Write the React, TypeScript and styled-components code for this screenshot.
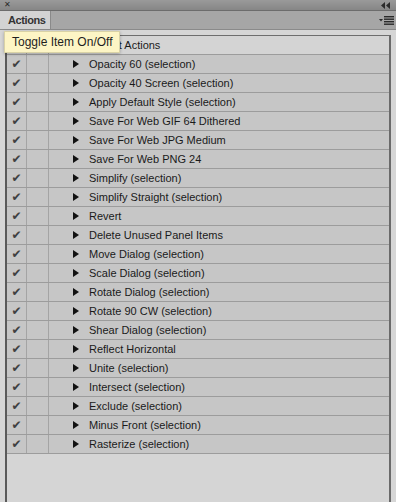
import styled, { createGlobalStyle } from 'styled-components';

const GlobalStyle = createGlobalStyle`
  html, body {
    margin: 0;
    padding: 0;
    background: #d6d6d6;
  }
  body {
    font-family: "Liberation Sans", Arial, sans-serif;
  }
`;

const actions = [
  'Opacity 60 (selection)',
  'Opacity 40 Screen (selection)',
  'Apply Default Style (selection)',
  'Save For Web GIF 64 Dithered',
  'Save For Web JPG Medium',
  'Save For Web PNG 24',
  'Simplify (selection)',
  'Simplify Straight (selection)',
  'Revert',
  'Delete Unused Panel Items',
  'Move Dialog (selection)',
  'Scale Dialog (selection)',
  'Rotate Dialog (selection)',
  'Rotate 90 CW (selection)',
  'Shear Dialog (selection)',
  'Reflect Horizontal',
  'Unite (selection)',
  'Intersect (selection)',
  'Exclude (selection)',
  'Minus Front (selection)',
  'Rasterize (selection)',
];

const Panel = styled.div`
  position: relative;
  width: 396px;
  height: 502px;
  display: flex;
  flex-direction: column;
  background: #d6d6d6;
  overflow: hidden;
`;

const TitleBar = styled.div`
  height: 10px;
  display: flex;
  align-items: center;
  justify-content: space-between;
  padding: 0 5px 0 4px;
  background: linear-gradient(#9a9a9a, #868686);
  border-bottom: 1px solid #6c6c6c;
  color: #2a2a2a;
  font-family: "DejaVu Sans", sans-serif;
  font-size: 8px;
  font-weight: bold;
  line-height: 10px;
`;

const TabBar = styled.div`
  height: 18px;
  display: flex;
  align-items: stretch;
  background: #a6a6a6;
  border-bottom: 1px solid #8a8a8a;
`;

const Tab = styled.div`
  width: 51px;
  display: flex;
  align-items: center;
  padding-left: 8px;
  box-sizing: border-box;
  background: #d3d3d3;
  border-right: 1px solid #8a8a8a;
  font-size: 11px;
  font-weight: bold;
  letter-spacing: -0.4px;
  color: #333;
`;

const MenuButton = styled.div`
  margin-left: auto;
  width: 20px;
  display: flex;
  align-items: center;
  justify-content: center;
`;

const Body = styled.div`
  flex: 1;
  display: flex;
  padding: 5px 5px 0 5px;
`;

const List = styled.div`
  flex: 1;
  display: flex;
  flex-direction: column;
  border-left: 2px solid #5a5a5a;
  border-right: 2px solid #6a6a6a;
  border-top: 1px solid #6e6e6e;
  background: #d5d5d5;
`;

const Row = styled.div<{ $folder?: boolean }>`
  height: 18px;
  display: flex;
  align-items: stretch;
  background: ${(p) => (p.$folder ? '#d4d4d4' : '#c6c6c6')};
  border-bottom: 1px solid #9c9c9c;
  font-size: 11px;
  color: #1a1a1a;
`;

const CheckCell = styled.div`
  width: 19px;
  display: flex;
  align-items: center;
  justify-content: center;
  border-right: 1px solid #a4a4a4;
  color: #404040;
  font-family: "DejaVu Sans", sans-serif;
  font-size: 12px;
`;

const DialogCell = styled.div`
  width: 21px;
  border-right: 1px solid #a4a4a4;
`;

const NameCell = styled.div<{ $indent: number }>`
  flex: 1;
  display: flex;
  align-items: center;
  padding-left: ${(p) => p.$indent}px;
  white-space: nowrap;
`;

const Triangle = styled.span<{ $down?: boolean }>`
  width: 0;
  height: 0;
  ${(p) =>
    p.$down
      ? `margin-right: 5px; border-left: 4px solid transparent; border-right: 4px solid transparent; border-top: 6px solid #111;`
      : `margin-right: 10px; border-top: 4px solid transparent; border-bottom: 4px solid transparent; border-left: 6px solid #111;`}
`;

const Tooltip = styled.div`
  position: absolute;
  left: 4px;
  top: 31px;
  height: 20px;
  padding: 0 6px 0 7px;
  display: flex;
  align-items: center;
  background: #fdf5c5;
  border: 1px solid #d9d2a6;
  box-shadow: 0 1px 3px rgba(0, 0, 0, 0.25);
  font-size: 12px;
  color: #1e1e1e;
  white-space: nowrap;
`;

const Check = () => <CheckCell>✔</CheckCell>;

const FolderIcon = () => (
  <svg width="13" height="10" viewBox="0 0 13 10" style={{ marginRight: 4 }}>
    <path d="M0.5 1.5h4l1 1h7v7h-12z" fill="#c9a24a" stroke="#7a5e20" />
  </svg>
);

export default function App() {
  return (
    <>
      <GlobalStyle />
      <Panel>
        <TitleBar>
          <span>✕</span>
          <svg width="10" height="7" viewBox="0 0 10 7">
            <path d="M4 0v7L0 3.5z M9 0v7L5 3.5z" fill="#2a2a2a" />
          </svg>
        </TitleBar>
        <TabBar>
          <Tab>Actions</Tab>
          <MenuButton>
            <svg width="15" height="9" viewBox="0 0 15 9">
              <path d="M0 3h4L2 5.5z" fill="#2a2a2a" />
              <rect x="5" y="0" width="10" height="1.4" fill="#2a2a2a" />
              <rect x="5" y="2.5" width="10" height="1.4" fill="#2a2a2a" />
              <rect x="5" y="5" width="10" height="1.4" fill="#2a2a2a" />
              <rect x="5" y="7.5" width="10" height="1.4" fill="#2a2a2a" />
            </svg>
          </MenuButton>
        </TabBar>
        <Body>
          <List>
            <Row $folder>
              <Check />
              <DialogCell />
              <NameCell $indent={8}>
                <Triangle $down />
                <FolderIcon />
                Default Actions
              </NameCell>
            </Row>
            {actions.map((name) => (
              <Row key={name}>
                <Check />
                <DialogCell />
                <NameCell $indent={24}>
                  <Triangle />
                  {name}
                </NameCell>
              </Row>
            ))}
          </List>
        </Body>
        <Tooltip>Toggle Item On/Off</Tooltip>
      </Panel>
    </>
  );
}
